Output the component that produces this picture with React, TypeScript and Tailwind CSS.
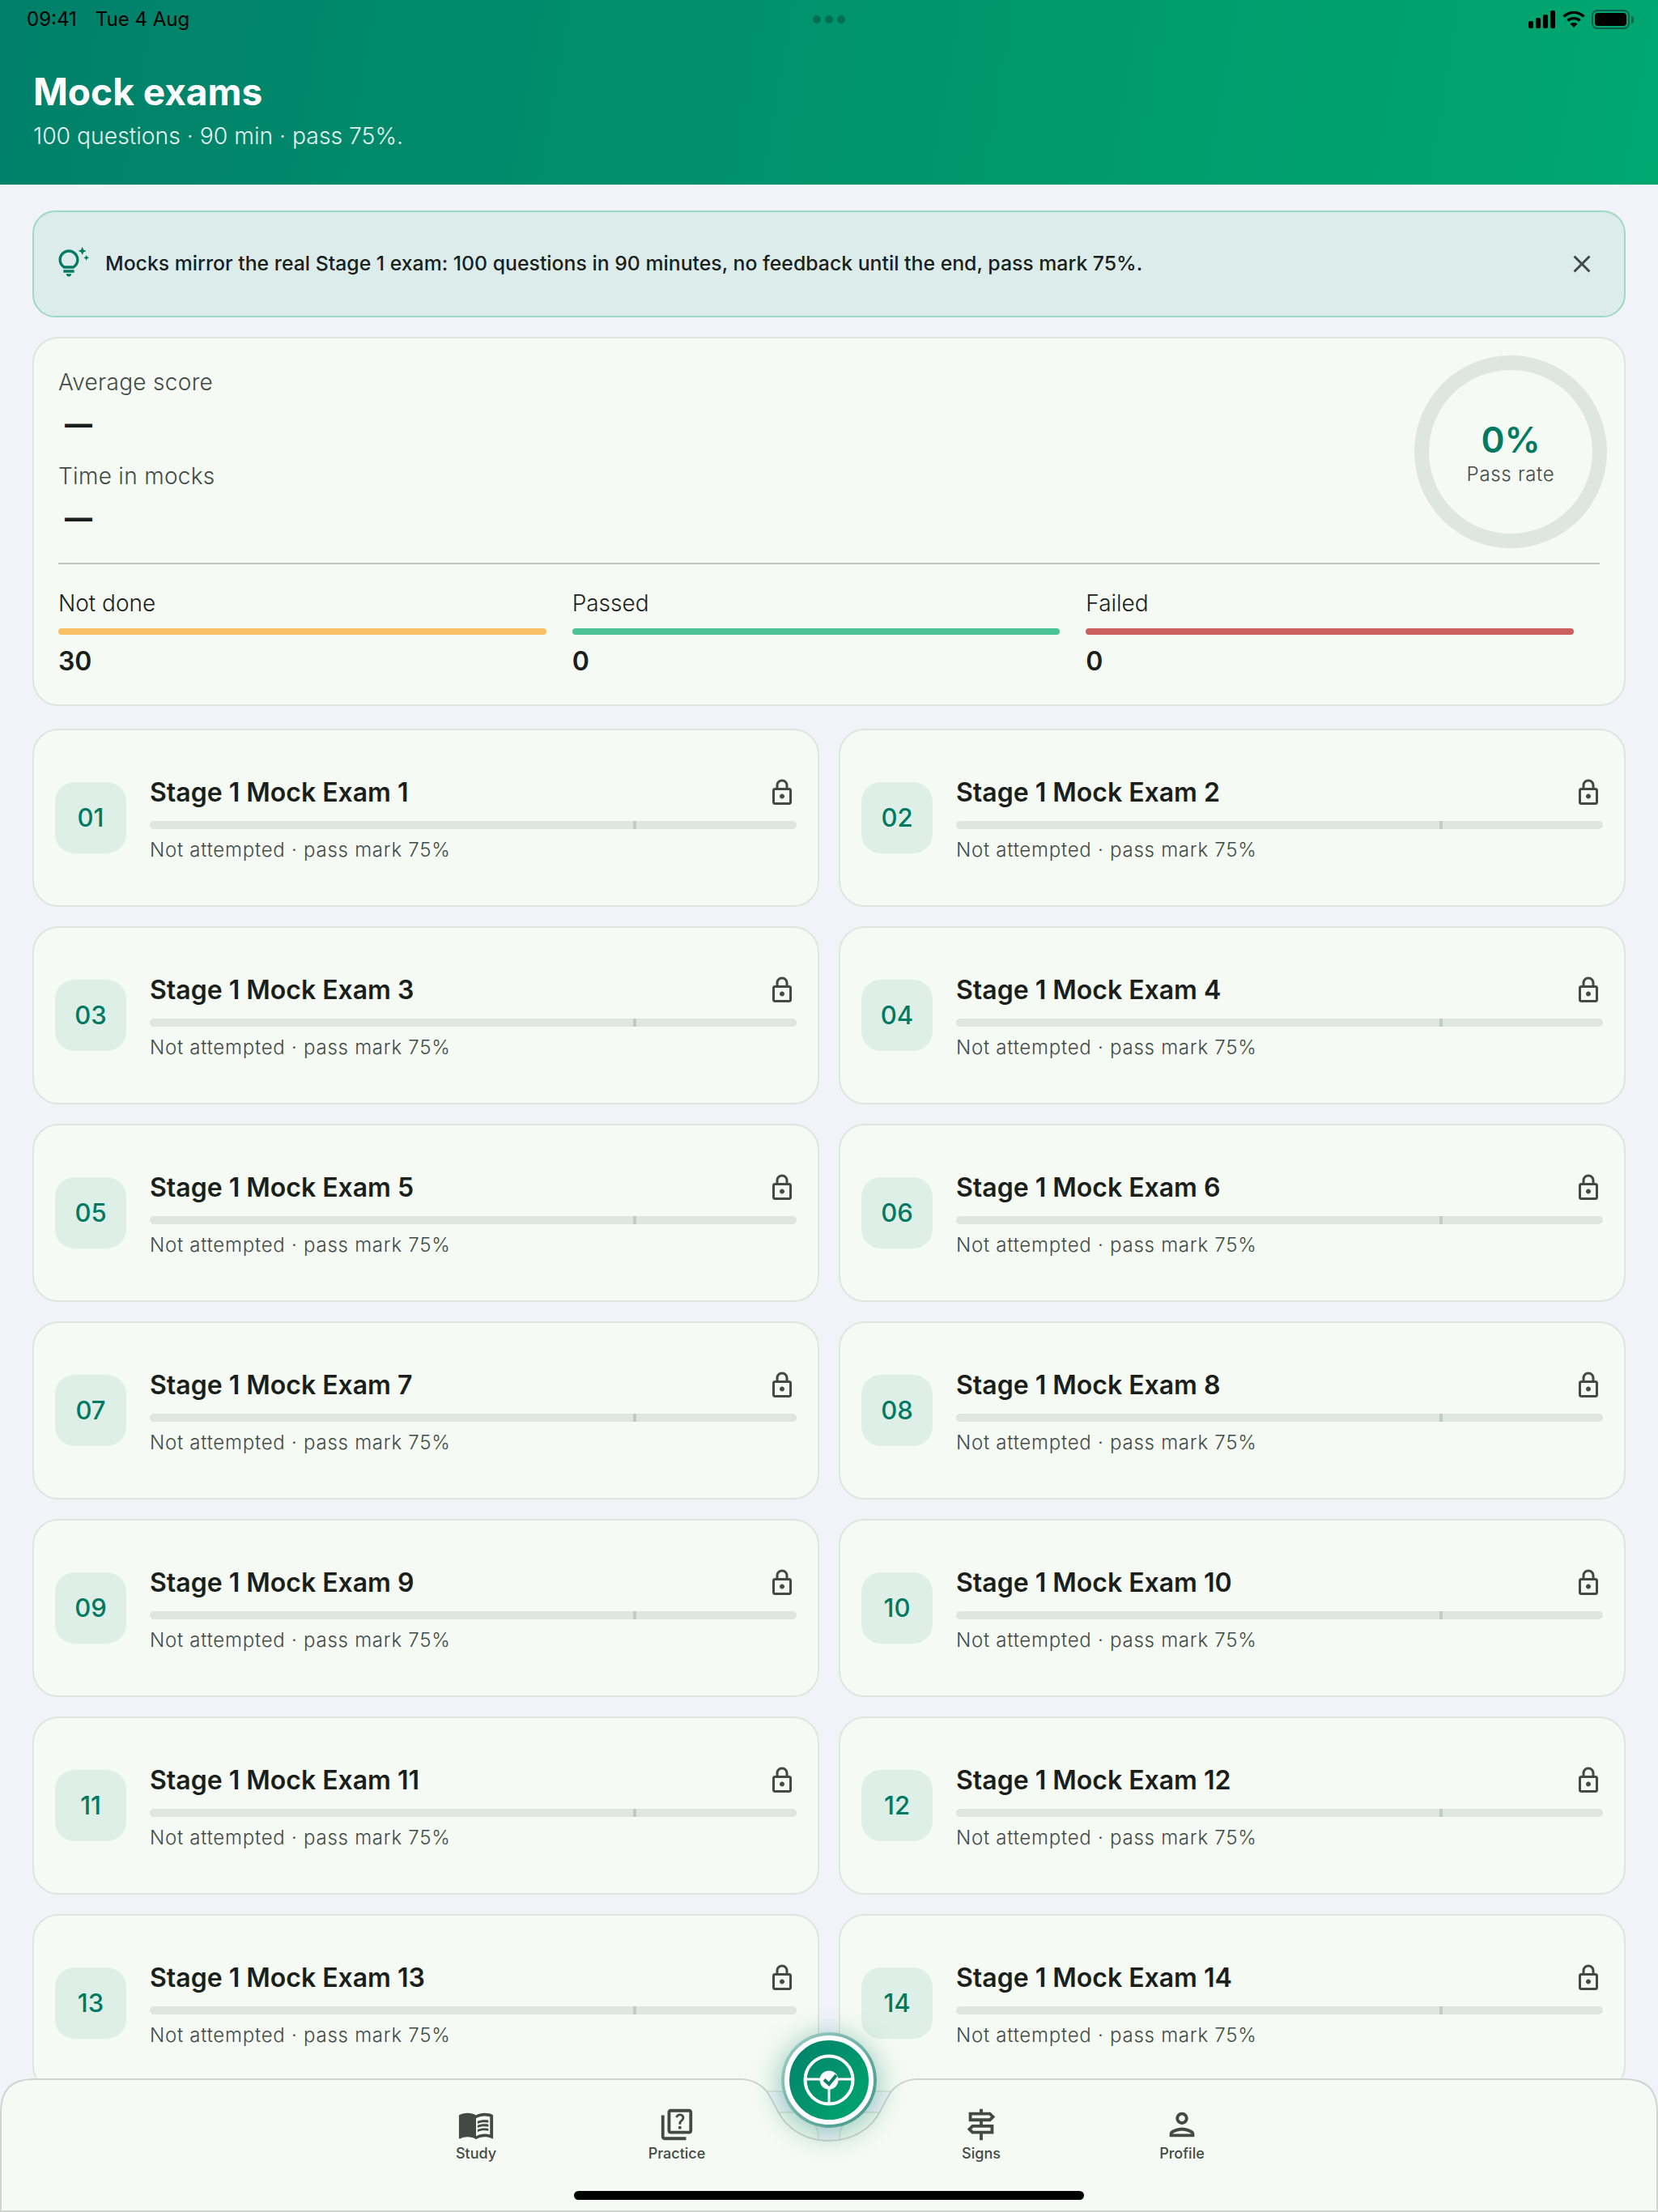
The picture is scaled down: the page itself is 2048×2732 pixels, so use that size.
import React from "react";
import { MdClose, MdMenuBook, MdOutlineLock, MdOutlinePerson, MdOutlineQuiz, MdOutlineSignpost, MdOutlineTipsAndUpdates } from "react-icons/md";

const exams = Array.from({ length: 16 }, (_, i) => i + 1);

const navLeft = [
  { label: "Study", icon: <MdMenuBook className="w-[46px] h-[46px]" /> },
  { label: "Practice", icon: <MdOutlineQuiz className="w-[46px] h-[46px]" /> },
];
const navRight = [
  { label: "Signs", icon: <MdOutlineSignpost className="w-[46px] h-[46px]" /> },
  { label: "Profile", icon: <MdOutlinePerson className="w-[46px] h-[46px]" /> },
];

const stats = [
  { label: "Not done", value: "30", bar: "bg-[#f9c164]" },
  { label: "Passed", value: "0", bar: "bg-[#4cc297]" },
  { label: "Failed", value: "0", bar: "bg-[#cc5f5f]" },
];

const NavItem = ({ label, icon }: { label: string; icon: React.ReactNode }) => (
  <div className="w-[248px] flex flex-col items-center text-[#434a45]">
    <div className="h-[46px] flex items-center justify-center">{icon}</div>
    <div className="mt-[2px] text-[18px] leading-[22px] font-medium">{label}</div>
  </div>
);

const ExamCard = ({ n }: { n: number }) => (
  <div className="h-[220px] rounded-[32px] border-2 border-[#dfe5df] bg-[#f5faf4] px-[26px] flex items-center gap-[29px]">
    <div className="w-[88px] h-[88px] shrink-0 rounded-[24px] bg-[#deefe7] flex items-center justify-center text-[31px] font-medium text-[#007a63]">
      {String(n).padStart(2, "0")}
    </div>
    <div className="flex-1 pt-[2px]">
      <div className="flex items-center justify-between h-[44px]">
        <div className="text-[32px] leading-[44px] font-semibold text-[#1a1f1c]">Stage 1 Mock Exam {n}</div>
        <MdOutlineLock className="w-[36px] h-[36px] text-[#434a45]" />
      </div>
      <div className="relative h-[10px] mt-[13px] rounded-full bg-[#dfe5df]">
        <div className="absolute left-[calc(75%-2px)] top-0 w-[4px] h-[10px] bg-[#c3ccc4]" />
      </div>
      <div className="mt-[10px] text-[24px] leading-[32px] font-light tracking-[0.75px] text-[#434a45]">Not attempted · pass mark 75%</div>
    </div>
  </div>
);

export default function App() {
  return (
    <div className="relative w-full h-[2732px] overflow-hidden bg-[#f1f3f9] font-['Inter',sans-serif]">
      <div className="h-[228px] bg-[linear-gradient(100deg,#00806a,#00a76f)] px-[40px]">
        <div className="h-[48px] flex items-center justify-between -ml-[7px] -mr-[10px]">
          <div className="flex gap-[23px] text-[24px] text-black">
            <span>09:41</span>
            <span>Tue 4 Aug</span>
          </div>
          <div className="flex items-center gap-[8px]">
            <svg width="34" height="22" viewBox="0 0 34 22" fill="#000">
              <rect x="0" y="13" width="6" height="9" rx="2" />
              <rect x="9" y="9" width="6" height="13" rx="2" />
              <rect x="18" y="5" width="6" height="17" rx="2" />
              <rect x="27" y="0" width="6" height="22" rx="2" />
            </svg>
            <svg width="28" height="22" viewBox="0 0 28 22" fill="none" stroke="#000" strokeWidth="3.4">
              <path d="M1.5 7.5C8.5 .6 19.500 .6 26.500 7.500" />
              <path d="M6.500 12.500C10.500 8.700 17.500 8.700 21.500 12.500" />
              <path d="M14 21l-4.500-4.500c2.500-2 6.500-2 9 0z" fill="#000" stroke="none" />
            </svg>
            <div className="flex items-center">
              <div className="w-[47px] h-[24px] rounded-[7px] border-2 border-[#0a5f4a] p-[2px]">
                <div className="w-full h-full rounded-[4px] bg-black" />
              </div>
              <div className="w-[3px] h-[9px] ml-[2px] rounded-r-full bg-[#0a5f4a]" />
            </div>
          </div>
        </div>
        <div className="mt-[38px] pl-[1px] text-[46px] leading-[54px] font-bold text-white">Mock exams</div>
        <div className="mt-[10px] pl-[1px] text-[28.3px] leading-[36px] font-light text-white/90">100 questions · 90 min · pass 75%.</div>
      </div>

      <div className="absolute left-[1004px] top-[19px] flex gap-[5px]">
        <span className="w-[10px] h-[10px] rounded-full bg-black/25" />
        <span className="w-[10px] h-[10px] rounded-full bg-black/25" />
        <span className="w-[10px] h-[10px] rounded-full bg-black/25" />
      </div>

      <div className="px-[40px] pt-[32px]">
        <div className="h-[132px] rounded-[28px] border-2 border-[#9fd8c6] bg-[#dcecea] pl-[28px] pr-[34px] flex items-center">
          <MdOutlineTipsAndUpdates className="w-[40px] h-[40px] text-[#007a63] shrink-0 -mt-[2px]" />
          <div className="ml-[20px] flex-1 text-[24.8px] font-medium text-[#1a1f1c]">
            Mocks mirror the real Stage 1 exam: 100 questions in 90 minutes, no feedback until the end, pass mark 75%.
          </div>
          <MdClose className="w-[36px] h-[36px] text-[#434a45]" />
        </div>

        <div className="mt-[24px] h-[456px] rounded-[32px] border-2 border-[#dfe5df] bg-[#f5faf4] px-[30px] pt-[21px]">
          <div className="flex justify-between h-[258px] border-b-2 border-[#bcc8bf]">
            <div className="pt-[15px] text-[28px] leading-[36px] font-light tracking-[0.3px] text-[#434a45]">
              <div>Average score</div>
              <div className="mt-[12px] ml-[8px] h-[44px] text-[34px] leading-[44px] font-extrabold text-[#1a1f1c]">—</div>
              <div className="mt-[24px]">Time in mocks</div>
              <div className="mt-[12px] ml-[8px] h-[44px] text-[34px] leading-[44px] font-extrabold text-[#1a1f1c]">—</div>
            </div>
            <div className="-mr-[9px] w-[238px] h-[238px] rounded-full border-[18px] border-[#dfe5df] flex flex-col items-center justify-center pt-[4px]">
              <div className="text-[44px] leading-[50px] font-semibold text-[#007a63]">0%</div>
              <div className="mt-[2px] text-[24px] leading-[32px] font-light tracking-[0.7px] text-[#434a45]">Pass rate</div>
            </div>
          </div>
          <div className="grid grid-cols-3 pt-[30px]">
            {stats.map((s) => (
              <div key={s.label} className="pr-[32px]">
                <div className="text-[28px] leading-[36px] font-light text-[#1a1f1c]">{s.label}</div>
                <div className={`mt-[13px] h-[8px] rounded-full ${s.bar}`} />
                <div className="mt-[13px] text-[32px] leading-[40px] font-semibold text-[#1a1f1c]">{s.value}</div>
              </div>
            ))}
          </div>
        </div>

        <div className="mt-[28px] grid grid-cols-2 gap-[24px]">
          {exams.map((n) => (
            <ExamCard key={n} n={n} />
          ))}
        </div>
      </div>

      <div className="absolute left-0 bottom-0 w-full h-[165px]">
        <svg className="absolute inset-0" width="2048" height="165" viewBox="0 0 2048 165">
          <path
            d="M1 164L1 41Q1 1 41 1L915 1C930 1 940 8 947 16C953 25 955 30 961 41C972 62 995 77 1024 77C1053 77 1076 62 1087 41C1093 30 1095 25 1101 16C1108 8 1118 1 1133 1L2007 1Q2047 1 2047 41L2047 164Z"
            fill="#f5faf4"
            stroke="#d0d5cf"
            strokeWidth="2"
          />
        </svg>
        <div className="relative flex justify-center pt-[34px]">
          {navLeft.map((item) => (
            <NavItem key={item.label} {...item} />
          ))}
          <div className="w-[128px]" />
          {navRight.map((item) => (
            <NavItem key={item.label} {...item} />
          ))}
        </div>
        <div className="absolute left-[709px] bottom-[15px] w-[630px] h-[11px] rounded-full bg-black" />
      </div>

      <div className="absolute left-[965px] top-[2510px] w-[118px] h-[118px] rounded-full bg-[linear-gradient(135deg,#a0d0c6,#3f9488)] shadow-[0_6px_36px_rgba(0,128,105,0.45)] p-[4px]">
        <div className="w-full h-full rounded-full border-[6px] border-white bg-[linear-gradient(135deg,#00806a,#00a76f)] flex items-center justify-center">
          <svg width="64" height="64" viewBox="0 0 64 64" fill="none" stroke="#fff" strokeWidth="3.5">
            <circle cx="32" cy="32" r="29.500" strokeWidth="4" />
            <path d="M3 31H22M42 31H61M32 42V61" strokeWidth="3" />
            <circle cx="32" cy="32" r="11.500" fill="#fff" stroke="none" />
            <path d="M26 31.500l6 5.500 9-11" stroke="#0b7f68" strokeWidth="4" />
          </svg>
        </div>
      </div>
    </div>
  );
}
